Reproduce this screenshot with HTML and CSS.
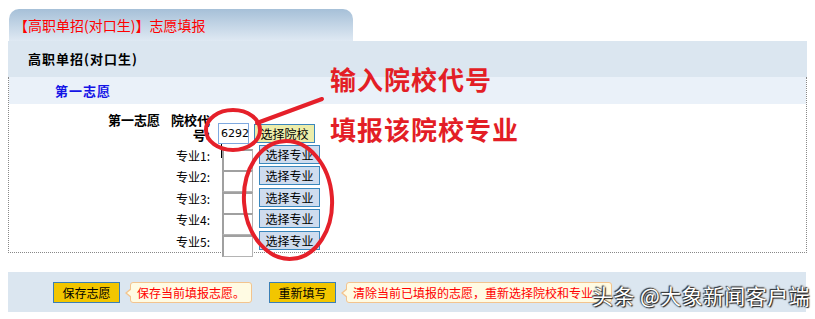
FILE: index.html
```html
<!DOCTYPE html>
<html lang="zh">
<head>
  <meta charset="UTF-8">
  <title>志愿填报</title>
  <link rel="stylesheet" href="styles.css">
</head>
<body>
<div class="page">
  <div class="tab">【高职单招(对口生)】志愿填报</div>
  <div class="head">高职单招(对口生)</div>
  <div class="box">
    <div class="sec">第一志愿</div>
    <div class="form">
      <div class="row first">
        <div class="col-a">第一志愿</div>
        <div class="lbl"><span>院校代</span><span>号:</span></div>
        <div class="fields">
          <div class="code">6292<i class="caret"></i></div>
          <div class="btn school">选择院校</div>
        </div>
      </div>
      <div class="row">
        <div class="col-a"></div>
        <div class="lbl">专业1:</div>
        <div class="fields"><div class="inp"></div><div class="btn">选择专业</div></div>
      </div>
      <div class="row">
        <div class="col-a"></div>
        <div class="lbl">专业2:</div>
        <div class="fields"><div class="inp"></div><div class="btn">选择专业</div></div>
      </div>
      <div class="row">
        <div class="col-a"></div>
        <div class="lbl">专业3:</div>
        <div class="fields"><div class="inp"></div><div class="btn">选择专业</div></div>
      </div>
      <div class="row">
        <div class="col-a"></div>
        <div class="lbl">专业4:</div>
        <div class="fields"><div class="inp"></div><div class="btn">选择专业</div></div>
      </div>
      <div class="row">
        <div class="col-a"></div>
        <div class="lbl">专业5:</div>
        <div class="fields"><div class="inp"></div><div class="btn">选择专业</div></div>
      </div>
    </div>
  </div>

  <div class="bar">
    <div class="act">保存志愿</div>
    <div class="tip">保存当前填报志愿。</div>
    <div class="act second">重新填写</div>
    <div class="tip">清除当前已填报的志愿，重新选择院校和专业。</div>
  </div>

  <!-- 标注 -->
  <div class="note n1">输入院校代号</div>
  <div class="note n2">填报该院校专业</div>
  <svg class="marks" width="815" height="319" viewBox="0 0 815 319">
    <ellipse cx="233" cy="130" rx="27" ry="20" fill="none" stroke="#e5202a" stroke-width="4"/>
    <line x1="257" y1="123" x2="322" y2="99" stroke="#e5202a" stroke-width="4" stroke-linecap="round"/>
    <ellipse cx="288" cy="200" rx="44" ry="59" fill="none" stroke="#e5202a" stroke-width="4" transform="rotate(-4 288 200)"/>
  </svg>
  <div class="mark">头条 @大象新闻客户端</div>
</div>
</body>
</html>
```

FILE: styles.css
```css
* {
  margin: 0;
  padding: 0;
  box-sizing: border-box;
}

body {
  font-family: "Noto Sans CJK SC", "DejaVu Sans", sans-serif;
  font-size: 12px;
  color: #000;
  background: #fff;
}

.page {
  position: relative;
  width: 815px;
  height: 319px;
  padding: 9px 8px 0 8px;
}

.tab {
  width: 344px;
  height: 32px;
  margin-left: 1px;
  border-radius: 10px 10px 0 0;
  background: linear-gradient(#a6c0d8, #dfe9f3);
  color: #f00;
  font-size: 14px;
  line-height: 32px;
  padding-left: 5px;
}

.head {
  width: 799px;
  height: 36px;
  background: #dbe6f0;
  font-size: 13px;
  font-weight: bold;
  line-height: 36px;
  padding-left: 20px;
  letter-spacing: 1px;
}

.box {
  width: 799px;
  height: 176px;
  border-left: 1px dotted #888;
  border-right: 1px dotted #888;
  border-bottom: 1px dotted #888;
}

.sec {
  height: 27px;
  background: #eaf1f9;
  color: #1414e6;
  font-size: 13px;
  font-weight: bold;
  line-height: 27px;
  padding-left: 46px;
  letter-spacing: 1px;
}

.form {
  padding: 8px 0 0 99px;
}

.row {
  display: flex;
  height: 21.4px;
}

.row.first {
  height: 33px;
}

.col-a {
  width: 62px;
  font-size: 13px;
  font-weight: bold;
  line-height: 15px;
}

.lbl {
  width: 40px;
  text-align: right;
  line-height: 21px;
  white-space: nowrap;
}

.first .lbl {
  display: flex;
  flex-direction: column;
  align-items: flex-end;
  font-size: 13px;
  font-weight: bold;
  line-height: 15px;
}

.fields {
  display: flex;
  align-items: flex-start;
  margin-left: 12px;
}

.first .fields {
  align-items: flex-end;
  margin-left: 8px;
  padding-bottom: 1px;
}

.code {
  width: 31px;
  height: 21px;
  border: 1px solid #7fa9e0;
  background: #fff;
  line-height: 19px;
  padding-left: 2px;
  font-family: "DejaVu Sans", sans-serif;
  font-size: 11px;
}

.caret {
  display: inline-block;
  width: 1px;
  height: 14px;
  background: #000;
  vertical-align: -2px;
}

.inp {
  width: 31px;
  height: 22px;
  margin-top: 4px;
  border: 1px solid #b4b4b4;
  border-top: 2px solid #a0a0a0;
  border-left: 2px solid #a0a0a0;
  background: #fff;
}

.btn {
  width: 61px;
  height: 19px;
  margin-left: 6px;
  border: 1px solid #3a87bd;
  background: #cfdcee;
  text-align: center;
  line-height: 17px;
}

.btn.school {
  margin-left: 5px;
  margin-bottom: 1px;
  background: #ecedaa;
}

.bar {
  display: flex;
  align-items: center;
  width: 798px;
  height: 40px;
  margin-top: 19px;
  background: #dbe6f0;
  padding-left: 45px;
}

.act {
  width: 67px;
  height: 21px;
  border: 1px solid #3b7fb5;
  background: #f2c600;
  text-align: center;
  line-height: 19px;
}

.act.second {
  margin-left: 17px;
}

.tip {
  position: relative;
  height: 21px;
  margin-left: 10px;
  padding: 0 6px;
  border: 1px solid #f3c48e;
  border-radius: 3px;
  background: #fffbe3;
  color: #f00;
  line-height: 19px;
}

.tip::before {
  content: "";
  position: absolute;
  left: -6px;
  top: 5px;
  border-top: 5px solid transparent;
  border-bottom: 5px solid transparent;
  border-right: 6px solid #f3c48e;
}

.tip::after {
  content: "";
  position: absolute;
  left: -4px;
  top: 6px;
  border-top: 4px solid transparent;
  border-bottom: 4px solid transparent;
  border-right: 5px solid #fffbe3;
}

.note {
  position: absolute;
  left: 330px;
  color: #e31e26;
  font-size: 26px;
  font-weight: bold;
  line-height: 30px;
  letter-spacing: 1px;
}

.n1 {
  top: 64px;
}

.n2 {
  top: 114px;
}

.marks {
  position: absolute;
  left: 0;
  top: 0;
}

.mark {
  position: absolute;
  left: 592px;
  top: 281px;
  color: #fff;
  font-size: 21px;
  line-height: 28px;
  letter-spacing: 0.4px;
  white-space: nowrap;
  text-shadow: 0 0 2px #222, 1px 1px 1px #222, -1px -1px 1px #333;
}
```
